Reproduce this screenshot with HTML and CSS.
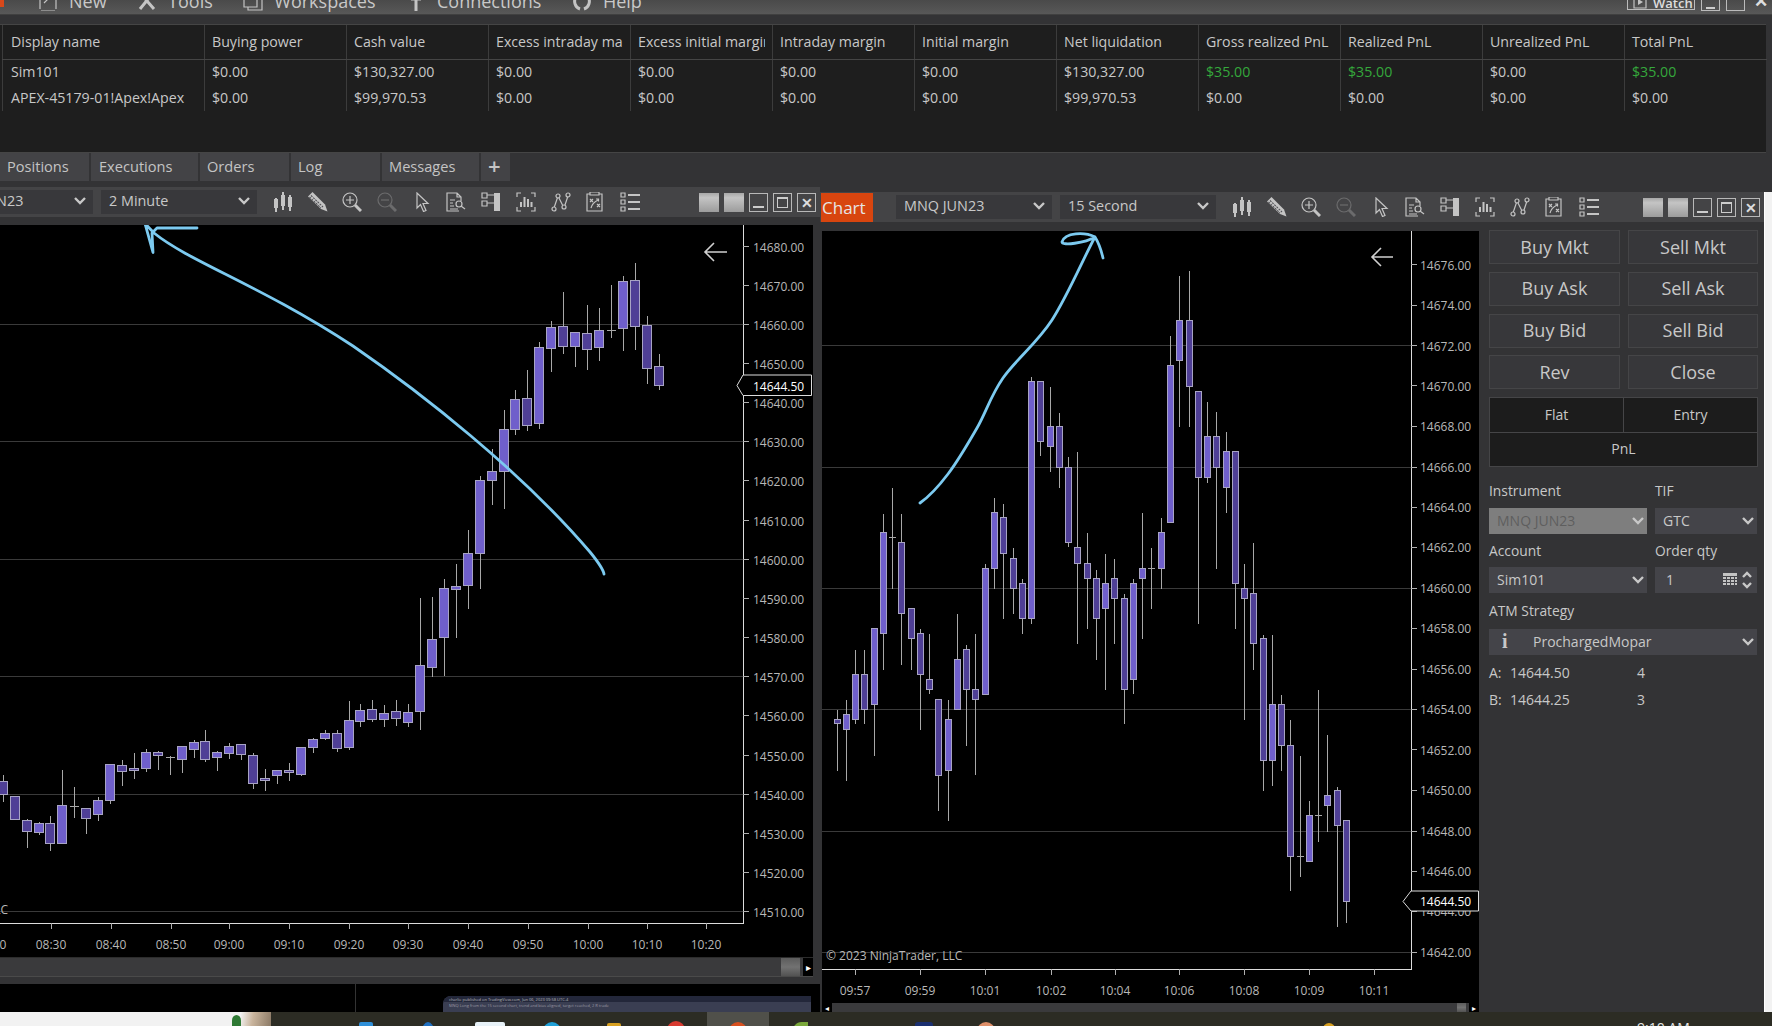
FILE: index.html
```html
<!DOCTYPE html>
<html lang="en">
<head>
<meta charset="utf-8">
<title>NinjaTrader</title>
<link rel="stylesheet" href="styles.css">
</head>
<body>
<svg class="defs" width="0" height="0" aria-hidden="true">
  <symbol id="i-candle" viewBox="0 0 20 20"><path class="s2" d="M3 6v14M10 0v18M17 3v16"/><path class="f" d="M1 7h4v9H1zM8 3h4v11H8zM15 5h4v10h-4z"/></symbol>
  <symbol id="i-pencil" viewBox="0 0 20 20"><path class="f" d="M4.500 0L0 4.500 13 17l6.500 2.500L17 12.500z"/><path class="sd" d="M3 3.500L15 15M1.500 5L13 16"/></symbol>
  <symbol id="i-zin" viewBox="0 0 20 20"><circle class="s" cx="8" cy="8" r="7"/><path class="s" d="M8 4v8M4 8h8"/><path class="s3" d="M13 13l6 6"/></symbol>
  <symbol id="i-zout" viewBox="0 0 20 20"><g class="dim"><circle class="s" cx="8" cy="8" r="7"/><path class="s" d="M4 8h8"/><path class="s3" d="M13 13l6 6"/></g></symbol>
  <symbol id="i-arrow" viewBox="0 0 20 20"><path class="s" d="M5 1v15l3.500-3.500 3 7 2.500-1-3-7h5z"/></symbol>
  <symbol id="i-doc" viewBox="0 0 20 20"><path class="s" d="M13 19H1V1h10l4 4v4M11 1v4h4M4 8h5M4 11h3M4 14h4M4 17h8"/><circle class="s" cx="13" cy="12" r="3"/><path class="s" d="M15 14l4 3"/></symbol>
  <symbol id="i-panel" viewBox="0 0 20 20"><path class="s" d="M1 1h5v5H1zM1 9h5v5H1zM6 3h7M6 11h7"/><path class="f" d="M13 1h6v18h-6z"/></symbol>
  <symbol id="i-bars" viewBox="0 0 20 20"><path class="s" d="M5 1H1v4M15 1h4v4M5 19H1v-4M15 19h4v-4"/><path class="s2" d="M5 15v-5M8.500 15V5M12 15V7M15.500 15v-5"/></symbol>
  <symbol id="i-nodes" viewBox="0 0 20 20"><path class="s" d="M3 16L7 4l6 12 4-12"/><circle class="sb" cx="3" cy="17" r="2"/><circle class="sb" cx="7" cy="4" r="2"/><circle class="sb" cx="13" cy="15" r="2"/><circle class="sb" cx="17" cy="3" r="2"/></symbol>
  <symbol id="i-clip" viewBox="0 0 20 20"><path class="s" d="M5 2H2v17h15V2h-3M5 0h9v3H5zM5 7l3 3M8 7l-3 3M12 12l3 3M15 12l-3 3M6 16c1-4 3-6 7-8M11 7h2.500v2.500"/></symbol>
  <symbol id="i-list" viewBox="0 0 20 20"><path class="s" d="M1 1h4v4H1zM1 8h4v4H1zM1 15h4v4H1z"/><path class="s2" d="M8 3h12M8 10h12M8 17h12"/></symbol>
  <symbol id="i-chev" viewBox="0 0 12 8"><path class="chev" d="M1 1l5 5 5-5"/></symbol>
</svg>

<header class="menubar">
  <span class="logo"></span>
  <nav class="menu">
    <span class="menu-item"><svg class="menu-ico" viewBox="0 0 20 20"><path class="s" d="M2 18V2h16v16M3 20h14M6 12l8-8M10 4h4v4"/></svg>New</span>
    <span class="menu-item"><svg class="menu-ico" viewBox="0 0 20 20"><path class="s3" d="M3 2l14 16M16 2L3 18"/></svg>Tools</span>
    <span class="menu-item"><svg class="menu-ico" viewBox="0 0 20 20"><path class="s" d="M1 3h13v13H1zM5 16v3h14V6h-5"/></svg>Workspaces</span>
    <span class="menu-item"><svg class="menu-ico" viewBox="0 0 20 20"><path class="s3" d="M10 8v12M5 8h10"/></svg>Connections</span>
    <span class="menu-item"><svg class="menu-ico" viewBox="0 0 20 20"><path class="s3" d="M4 6a8 8 0 0 0 4 12M16 6a8 8 0 0 1-4 12"/></svg>Help</span>
  </nav>
  <div class="menu-right">
    <span class="watch"><svg class="watch-ico" viewBox="0 0 14 14"><path class="s" d="M1 1h12v12H1z"/><path class="f" d="M5 4l5 3-5 3z"/></svg>Watch</span>
    <span class="tb tb-min"></span>
    <span class="tb tb-max"></span>
    <span class="tb tb-close">✕</span>
  </div>
</header>

<section class="accounts">
  <table class="acct-table">
    <colgroup><col class="c-first"><col span="11" class="c-rest"></colgroup>
    <thead>
      <tr><th>Display name</th><th>Buying power</th><th>Cash value</th><th><span class="clip">Excess intraday margin</span></th><th><span class="clip">Excess initial margin</span></th><th>Intraday margin</th><th>Initial margin</th><th>Net liquidation</th><th>Gross realized PnL</th><th>Realized PnL</th><th>Unrealized PnL</th><th>Total PnL</th></tr>
    </thead>
    <tbody>
      <tr><td>Sim101</td><td>$0.00</td><td>$130,327.00</td><td>$0.00</td><td>$0.00</td><td>$0.00</td><td>$0.00</td><td>$130,327.00</td><td class="pos">$35.00</td><td class="pos">$35.00</td><td>$0.00</td><td class="pos">$35.00</td></tr>
      <tr><td>APEX-45179-01!Apex!Apex</td><td>$0.00</td><td>$99,970.53</td><td>$0.00</td><td>$0.00</td><td>$0.00</td><td>$0.00</td><td>$99,970.53</td><td>$0.00</td><td>$0.00</td><td>$0.00</td><td>$0.00</td></tr>
    </tbody>
  </table>
</section>

<nav class="tabs">
  <span class="tab tab-pos">Positions</span>
  <span class="tab tab-exe">Executions</span>
  <span class="tab tab-ord">Orders</span>
  <span class="tab tab-log">Log</span>
  <span class="tab tab-msg">Messages</span>
  <span class="tab tab-add">+</span>
</nav>

<main class="desktop">
  <span class="desk-line"></span>
  <div class="thumb">
    <div class="thumb-head">charlie published on TradingView.com, Jun 06, 2023 09:58 UTC-4</div>
    <div class="thumb-body">MNQ Long from the 15 second chart, trend and bias aligned, target reached, 2 R trade</div>
  </div>

  <article class="window win-left">
    <div class="toolbar">
      <div class="select sel-clip"><span>MNQ JUN23</span><svg class="sel-chev"><use href="#i-chev"/></svg></div>
      <div class="select sel-tf"><span>2 Minute</span><svg class="sel-chev"><use href="#i-chev"/></svg></div>
      <div class="tools">
        <svg class="tool"><use href="#i-candle"/></svg><svg class="tool"><use href="#i-pencil"/></svg><svg class="tool"><use href="#i-zin"/></svg><svg class="tool"><use href="#i-zout"/></svg><svg class="tool"><use href="#i-arrow"/></svg><svg class="tool"><use href="#i-doc"/></svg><svg class="tool"><use href="#i-panel"/></svg><svg class="tool"><use href="#i-bars"/></svg><svg class="tool"><use href="#i-nodes"/></svg><svg class="tool"><use href="#i-clip"/></svg><svg class="tool"><use href="#i-list"/></svg>
      </div>
      <div class="winbtns">
        <span class="wb wb-light"></span><span class="wb wb-light"></span><span class="wb wb-min"></span><span class="wb wb-max"></span><span class="wb wb-close">✕</span>
      </div>
    </div>
    <svg class="chart chart-left" viewBox="0 225 813 732">
      <path class="grid" d="M0 324.500H743M0 441.500H743M0 559.500H743M0 676.500H743M0 794.500H743M0 911H743"/>
      <path class="axis" d="M743 225V923H0"/>
      <path class="tick" d="M743 246.500h6M743 285.500h6M743 324.500h6M743 363.500h6M743 402.500h6M743 441.500h6M743 480.500h6M743 520.500h6M743 559.500h6M743 598.500h6M743 637.500h6M743 676.500h6M743 715.500h6M743 755.500h6M743 794.500h6M743 833.500h6M743 872.500h6M743 911.500h6M51 923v6M111 923v6M171 923v6M229 923v6M289 923v6M349 923v6M408 923v6M468 923v6M528 923v6M588 923v6M647 923v6M706 923v6"/>
      <g transform="translate(0 220) scale(.33333 .43367)">
        <path class="wick" d="M10 1280V1343M82 1382V1447M118 1387V1418M151 1375V1456M187 1269V1350M223 1307V1378M211 1353H236M259 1357V1415M295 1331V1385M331 1338V1346M367 1246V1306M403 1230V1288M439 1219V1272M475 1224V1268M511 1235V1279M499 1240H524M547 1244V1276M583 1200V1240M616 1175V1249M652 1224V1270M688 1205V1242M724 1233V1246M760 1230V1313M796 1267V1316M832 1281V1300M868 1253V1293M904 1279V1283M940 1195V1230M976 1177V1198M1012 1177V1226M1048 1109V1223M1081 1117V1170M1117 1107V1157M1153 1119V1168M1189 1107V1166M1225 1117V1170M1261 872V1175M1297 869V1054M1333 827V1051"/>
        <path class="up" d="M105 1391h26v21h-26zM174 1350h26v88h-26zM282 1338h26v33h-26zM318 1255h26v83h-26zM426 1228h26v37h-26zM534 1214h26v30h-26zM570 1205h26v16h-26zM639 1228h26v12h-26zM675 1214h26v16h-26zM819 1269h26v12h-26zM891 1216h26v63h-26zM927 1198h26v19h-26zM963 1184h26v12h-26zM1035 1154h26v63h-26zM1068 1131h26v26h-26zM1140 1138h26v14h-26zM1212 1135h26v24h-26zM1248 1027h26v106h-26zM1284 967h26v65h-26zM1320 850h26v113h-26z"/>
        <path class="down" d="M-3 1295h26v29h-26zM33 1329h26v53h-26zM69 1385h26v25h-26zM138 1391h26v47h-26zM246 1357h26v23h-26zM354 1258h26v13h-26zM390 1265h26v5h-26zM462 1228h26v7h-26zM603 1202h26v42h-26zM711 1209h26v24h-26zM747 1235h26v65h-26zM783 1288h26v5h-26zM855 1269h26v5h-26zM999 1184h26v35h-26zM1104 1129h26v23h-26zM1176 1133h26v17h-26z"/>
      </g>
      <g transform="translate(400 220) scale(.33333 .43367)">
        <path class="wick" d="M169 794V964M205 714V898M241 590V852M277 527V657M313 437V666M346 392V496M382 345V487M418 282V482M454 234V350M490 165V308M526 292V339M562 197V346M598 202V325M634 149V273M622 255H647M670 130V302M706 100V300M742 222V378M778 308V392"/>
        <path class="up" d="M156 845h26v7h-26zM192 769h26v74h-26zM228 601h26v168h-26zM264 580h26v21h-26zM300 483h26v97h-26zM333 414h26v69h-26zM405 294h26v175h-26zM441 248h26v48h-26zM513 259h26v33h-26zM585 255h26v39h-26zM657 142h26v108h-26z"/>
        <path class="down" d="M369 411h26v63h-26zM477 245h26v47h-26zM549 262h26v36h-26zM693 139h26v106h-26zM729 243h26v100h-26zM765 338h26v44h-26z"/>
      </g>
      <path class="ink" d="M197 228H157L152 233L153 252.500L145 223.500L154 233C190 262 260 285 353 346C420 392 520 470 590 552Q603 568 604 574"/>
      <path class="back" d="M727 252H705M714 243L705 252L714 261"/>
      <g class="ax">
        <text x="753" y="247">14680.00</text><text x="753" y="286">14670.00</text><text x="753" y="325">14660.00</text><text x="753" y="364">14650.00</text><text x="753" y="403">14640.00</text><text x="753" y="442">14630.00</text><text x="753" y="481">14620.00</text><text x="753" y="521">14610.00</text><text x="753" y="560">14600.00</text><text x="753" y="599">14590.00</text><text x="753" y="638">14580.00</text><text x="753" y="677">14570.00</text><text x="753" y="716">14560.00</text><text x="753" y="756">14550.00</text><text x="753" y="795">14540.00</text><text x="753" y="834">14530.00</text><text x="753" y="873">14520.00</text><text x="753" y="912">14510.00</text>
      </g>
      <path class="tag" d="M737 385.500L743 375H811.500V395.500H743Z"/>
      <text class="ax ax-now" x="753" y="386">14644.50</text>
      <g class="ax ax-mid">
        <text x="-9" y="944">08:20</text><text x="51" y="944">08:30</text><text x="111" y="944">08:40</text><text x="171" y="944">08:50</text><text x="229" y="944">09:00</text><text x="289" y="944">09:10</text><text x="349" y="944">09:20</text><text x="408" y="944">09:30</text><text x="468" y="944">09:40</text><text x="528" y="944">09:50</text><text x="588" y="944">10:00</text><text x="647" y="944">10:10</text><text x="706" y="944">10:20</text>
      </g>
      <text class="ax ax-end" x="8" y="909">© 2023 NinjaTrader, LLC</text>
    </svg>
    <div class="hscroll">
      <span class="thumb-bar"></span>
      <span class="scroll-arrow">▸</span>
    </div>
  </article>

  <article class="window win-right">
    <div class="toolbar">
      <span class="chart-tab">Chart</span>
      <div class="select sel-tf"><span>MNQ JUN23</span><svg class="sel-chev"><use href="#i-chev"/></svg></div>
      <div class="select sel-tf"><span>15 Second</span><svg class="sel-chev"><use href="#i-chev"/></svg></div>
      <div class="tools">
        <svg class="tool"><use href="#i-candle"/></svg><svg class="tool"><use href="#i-pencil"/></svg><svg class="tool"><use href="#i-zin"/></svg><svg class="tool"><use href="#i-zout"/></svg><svg class="tool"><use href="#i-arrow"/></svg><svg class="tool"><use href="#i-doc"/></svg><svg class="tool"><use href="#i-panel"/></svg><svg class="tool"><use href="#i-bars"/></svg><svg class="tool"><use href="#i-nodes"/></svg><svg class="tool"><use href="#i-clip"/></svg><svg class="tool"><use href="#i-list"/></svg>
      </div>
      <div class="winbtns">
        <span class="wb wb-light"></span><span class="wb wb-light"></span><span class="wb wb-min"></span><span class="wb wb-max"></span><span class="wb wb-close">✕</span>
      </div>
    </div>
    <div class="win-body">
      <div class="chart-col">
        <svg class="chart chart-right" viewBox="822 231 657 772">
          <path class="grid" d="M822 345H1411M822 467H1411M822 588H1411M822 709.500H1411M822 831H1411M822 952H1411"/>
          <path class="axis" d="M1411 231V969H822"/>
          <path class="tick" d="M1411 264.500h6M1411 305h6M1411 345h6M1411 385.500h6M1411 426h6M1411 467h6M1411 507h6M1411 547h6M1411 588h6M1411 628h6M1411 669h6M1411 709.500h6M1411 749h6M1411 790h6M1411 831h6M1411 871h6M1411 911h6M1411 952h6M855 969v6M920 969v6M985 969v6M1051 969v6M1115 969v6M1179 969v6M1244 969v6M1309 969v6M1374 969v6"/>
          <g transform="translate(820 220) scale(.33333 .43367)">
            <path class="wick" d="M52 1130V1270M79 1107V1293M106 992V1163M133 992V1163M163 1117V1235M190 677V1037M217 618V850M207 732H228M244 677V1026M274 965V1037M301 943V1175M328 955V1094M355 1280V1362M385 1107V1385M412 909V1013M439 979V1212M466 955V1280M496 794V803M523 642V850M550 654V919M580 757V908M607 828V955M634 363V931M661 511V545M691 385V582M718 444V617M745 547V755M772 536V977M802 722V942M829 806V1014M856 770V1083M883 782V977M913 862V1163M940 828V1094"/>
            <path class="up" d="M70 1140h19v35h-19zM97 1048h19v104h-19zM154 942h19v175h-19zM181 720h19v234h-19zM376 1152h19v118h-19zM403 1013h19v116h-19zM487 803h19v291h-19zM514 674h19v129h-19zM625 372h19v547h-19zM682 476h19v46h-19zM847 838h19v58h-19zM931 838h19v221h-19z"/>
            <path class="down" d="M43 1152h19v10h-19zM124 1048h19v81h-19zM235 743h19v164h-19zM265 896h19v69h-19zM292 953h19v95h-19zM319 1059h19v24h-19zM346 1106h19v174h-19zM430 990h19v92h-19zM457 1082h19v24h-19zM541 686h19v83h-19zM571 780h19v70h-19zM598 838h19v81h-19zM652 372h19v139h-19zM709 476h19v95h-19zM736 571h19v173h-19zM763 755h19v37h-19zM793 792h19v35h-19zM820 827h19v92h-19zM874 827h19v46h-19zM904 873h19v209h-19z"/>
          </g>
          <g transform="translate(1130 220) scale(.33333 .45918)">
            <path class="wick" d="M37 638V912M64 714V847M54 759H75M94 650V803M121 253V317M148 121V450M178 110V450M205 561V880M232 396V573M259 418V760M289 462V638M316 792V890M343 749V1088M370 704V980M400 903V1244M427 903V1232M454 1034V1200M481 1089V1462M511 1167V1430M501 1386H522M538 1265V1297M565 1024V1355M555 1297H576M592 1122V1332M622 1234V1540M649 1484V1530"/>
            <path class="up" d="M28 759h19v22h-19zM85 680h19v79h-19zM112 317h19v342h-19zM139 218h19v88h-19zM223 471h19v90h-19zM280 504h19v79h-19zM418 1055h19v122h-19zM529 1297h19v100h-19zM583 1253h19v22h-19z"/>
            <path class="down" d="M169 218h19v144h-19zM196 373h19v188h-19zM250 471h19v68h-19zM307 504h19v288h-19zM334 802h19v22h-19zM361 813h19v109h-19zM391 911h19v266h-19zM445 1055h19v89h-19zM472 1144h19v242h-19zM613 1242h19v77h-19zM640 1308h19v176h-19z"/>
          </g>
          <path class="ink" d="M920 503C930 496 938.500 486.500 948 474C957.500 461.500 967.800 444 977 428C986.200 412 990.500 396 1003 378C1015.500 360 1036.700 343.500 1052 320C1067.300 296.500 1085 255 1095 237C1085 232 1065 232 1062 242C1062 246 1085 243 1095 237Q1100 245 1103 258"/>
          <path class="back" d="M1393 257H1372M1381 248L1372 257L1381 266"/>
          <g class="ax">
            <text x="1420" y="265">14676.00</text><text x="1420" y="305.500">14674.00</text><text x="1420" y="346">14672.00</text><text x="1420" y="386">14670.00</text><text x="1420" y="426.500">14668.00</text><text x="1420" y="467">14666.00</text><text x="1420" y="507">14664.00</text><text x="1420" y="547.500">14662.00</text><text x="1420" y="588">14660.00</text><text x="1420" y="628.500">14658.00</text><text x="1420" y="669">14656.00</text><text x="1420" y="709.500">14654.00</text><text x="1420" y="750">14652.00</text><text x="1420" y="790">14650.00</text><text x="1420" y="831">14648.00</text><text x="1420" y="871">14646.00</text><text x="1420" y="911">14644.00</text><text x="1420" y="952">14642.00</text>
          </g>
          <path class="tag" d="M1403 901.500L1411 891H1478.500V911H1411Z"/>
          <text class="ax ax-now" x="1420" y="901.500">14644.50</text>
          <g class="ax ax-mid">
            <text x="855" y="990">09:57</text><text x="920" y="990">09:59</text><text x="985" y="990">10:01</text><text x="1051" y="990">10:02</text><text x="1115" y="990">10:04</text><text x="1179" y="990">10:06</text><text x="1244" y="990">10:08</text><text x="1309" y="990">10:09</text><text x="1374" y="990">10:11</text>
          </g>
          <text class="ax" x="826" y="955">© 2023 NinjaTrader, LLC</text>
        </svg>
        <div class="hscroll hscroll-r">
          <span class="scroll-arrow">◂</span>
          <span class="scroll-fill"></span>
          <span class="thumb-bar"></span>
          <span class="scroll-arrow">▸</span>
        </div>
      </div>

      <aside class="order-panel">
        <div class="btn-grid">
          <button class="ord-btn">Buy Mkt</button><button class="ord-btn">Sell Mkt</button>
          <button class="ord-btn">Buy Ask</button><button class="ord-btn">Sell Ask</button>
          <button class="ord-btn">Buy Bid</button><button class="ord-btn">Sell Bid</button>
          <button class="ord-btn">Rev</button><button class="ord-btn">Close</button>
        </div>
        <div class="pos-box">
          <div class="pos-cell">Flat</div><div class="pos-cell pos-cell-r">Entry</div>
          <div class="pos-cell pos-wide">PnL</div>
        </div>
        <div class="form-grid">
          <label class="lbl lbl-1">Instrument</label><label class="lbl lbl-1">TIF</label>
          <div class="field field-off"><span>MNQ JUN23</span><svg class="sel-chev"><use href="#i-chev"/></svg></div>
          <div class="field"><span>GTC</span><svg class="sel-chev"><use href="#i-chev"/></svg></div>
          <label class="lbl lbl-2">Account</label><label class="lbl lbl-2">Order qty</label>
          <div class="field"><span>Sim101</span><svg class="sel-chev"><use href="#i-chev"/></svg></div>
          <div class="field field-qty"><span>1</span>
            <svg class="calc" viewBox="0 0 14 14"><path class="f" d="M0 0h14v3H0zM0 4h3v2H0zM4 4h3v2H4zM8 4h3v2H8zM12 4h2v2h-2zM0 7h3v2H0zM4 7h3v2H4zM8 7h3v2H8zM12 7h2v2h-2zM0 10h3v2H0zM4 10h3v2H4zM8 10h3v2H8zM12 10h2v2h-2z"/></svg>
            <svg class="spin" viewBox="0 0 10 18"><path class="chev" d="M1 6l4-4 4 4M1 12l4 4 4-4"/></svg>
          </div>
          <label class="lbl lbl-3 span2">ATM Strategy</label>
          <div class="field span2 field-atm"><span class="info">i</span><span>ProchargedMopar</span><svg class="sel-chev"><use href="#i-chev"/></svg></div>
        </div>
        <div class="quote"><span>A:</span><span>14644.50</span><span>4</span></div>
        <div class="quote"><span>B:</span><span>14644.25</span><span>3</span></div>
      </aside>
    </div>
  </article>
  <span class="screen-edge"></span>
</main>

<footer class="taskbar">
  <div class="task-wall"><span class="wall-leaf"></span><span class="wall-photo"></span></div>
  <div class="task-icons">
    <span class="slot"><i class="ti ti-blue-sq"></i></span>
    <span class="slot"><i class="ti ti-blue-tri"></i></span>
    <span class="slot"><i class="ti ti-white"></i></span>
    <span class="slot"><i class="ti ti-cyan"></i></span>
    <span class="slot"><i class="ti ti-yellow"></i></span>
    <span class="slot"><i class="ti ti-red"></i></span>
    <span class="slot slot-active"><i class="ti ti-orange"></i></span>
    <span class="slot"><i class="ti ti-green"></i></span>
    <span class="slot"></span>
    <span class="slot"><i class="ti ti-navy"></i></span>
    <span class="slot"><i class="ti ti-peach"></i></span>
  </div>
  <span class="tray-dot"></span>
  <time class="clock">9:10 AM</time>
</footer>
</body>
</html>
```
FILE: styles.css
```css
* { box-sizing: border-box; }
html, body { margin: 0; height: 100%; }
body {
  width: 1772px;
  height: 1026px;
  overflow: hidden;
  background: #333335;
  color: #c8c8c8;
  font-family: "Open Sans", "Noto Sans", sans-serif;
  font-size: 14px;
  display: flex;
  flex-direction: column;
}
.defs { position: absolute; }

/* shared icon strokes */
.s { fill: none; stroke: #c4c4c4; stroke-width: 1.2; }
.s2 { fill: none; stroke: #c4c4c4; stroke-width: 2; }
.s3 { fill: none; stroke: #c4c4c4; stroke-width: 3; }
.sb { fill: #444446; stroke: #c4c4c4; stroke-width: 1.2; }
.sd { fill: none; stroke: #505055; stroke-width: 1.1; stroke-dasharray: 2 1; }
.f { fill: #c4c4c4; }
.dim { opacity: .3; }
.chev { fill: none; stroke: #c8c8c8; stroke-width: 2.4; }

/* menu */
.menubar {
  flex: none;
  height: 15px;
  background: linear-gradient(#4a4a4a, #585858);
  border-bottom: 1px solid #404040;
  display: flex;
  overflow: hidden;
  position: relative;
}
.logo { position: absolute; left: 0; top: 0; width: 4px; height: 7px; background: #d8481a; }
.menu { display: flex; gap: 30.500px; margin: -13px 0 0 38px; height: 28px; }
.menu-item { display: flex; align-items: center; gap: 11px; font-size: 18px; line-height: 28px; color: #c8c8c8; }
.menu-ico { width: 20px; height: 20px; }
.menu-right { margin-left: auto; display: flex; align-items: flex-start; gap: 6px; padding-right: 2px; }
.watch {
  width: 68px; height: 11px; margin-top: -1px;
  border: 1px solid #bbb;
  font-size: 13px; font-weight: 600; line-height: 6px;
  display: flex; gap: 6px; padding-left: 5px;
  overflow: hidden; color: #ddd;
}
.watch-ico { width: 14px; height: 14px; margin-top: -5px; flex: none; }
.tb { width: 19px; height: 12px; margin-top: -1px; border: 1px solid #bbb; position: relative; overflow: hidden; font-size: 17px; line-height: 4px; text-align: center; color: #ddd; }
.tb-min::after { content: ""; position: absolute; left: 4px; right: 4px; bottom: 1px; height: 2px; background: #ccc; }
.tb-close { border: 0; font-weight: 700; }

/* account grid */
.accounts {
  flex: none;
  height: 129px;
  margin: 9px 6px 0 0;
  background: #1e1e1e;
  border-top: 1px solid #454545;
  border-bottom: 1px solid #454545;
  padding-left: 2px;
}
.acct-table { border-collapse: collapse; table-layout: fixed; width: 1764px; }
.c-first { width: 202px; }
.c-rest { width: 142px; }
.acct-table th, .acct-table td {
  padding: 0 7px;
  font-size: 14.2px;
  font-weight: 400;
  text-align: left;
  white-space: nowrap;
  overflow: hidden;
  border-left: 1px solid #3c3c3c;
  color: #c8c8c8;
}
.acct-table th:first-child, .acct-table td:first-child { padding-left: 8px; }
.acct-table th { height: 34px; border-bottom: 1px solid #454545; }
.acct-table td { height: 26px; padding-bottom: 2px; }
.acct-table td.pos { color: #35a83c; }
.clip { display: block; overflow: hidden; }

/* tabs */
.tabs { flex: none; height: 39px; display: flex; align-items: flex-start; gap: 2px; }
.tab { height: 28px; background: #434346; padding-left: 7px; line-height: 27px; color: #c4c4c4; font-size: 14.6px; }
.tab-pos { width: 89px; }
.tab-exe { width: 107px; padding-left: 8px; }
.tab-ord { width: 89px; }
.tab-log { width: 89px; }
.tab-msg { width: 97px; }
.tab-add { width: 29px; font-size: 22px; font-weight: 600; padding-left: 7px; line-height: 25px; }

/* desktop + windows */
.desktop { flex: none; height: 820px; position: relative; background: #000; }
.desk-line { position: absolute; left: 355px; top: 792px; width: 1px; height: 28px; background: #333; }
.thumb { position: absolute; left: 443px; top: 804px; width: 368px; height: 16px; background: #3a3e52; border-radius: 8px 0 0 0; overflow: hidden; font-size: 4px; color: #bbb; }
.thumb-head { height: 6px; background: #23273a; padding: 1px 0 0 6px; white-space: nowrap; line-height: 5px; }
.thumb-body { padding: 1px 0 0 6px; white-space: nowrap; line-height: 5px; color: #9a9aa4; }
.window { position: absolute; background: #333335; display: flex; flex-direction: column; }
.win-left { left: 0; top: -5px; width: 820px; height: 797px; overflow: hidden; }
.win-right { left: 820px; top: 0; width: 945px; height: 820px; border-right: 1px solid #fff; }
.screen-edge { position: absolute; right: 0; top: 0; width: 7px; height: 100%; background: #f2f2f2; }

.toolbar { flex: none; height: 30px; background: #444446; display: flex; align-items: center; }
.win-left .toolbar { padding-right: 4px; }
.win-right .toolbar { padding-right: 4px; padding-left: 1px; }
.select { width: 156px; height: 24px; background: #38383b; display: flex; align-items: center; justify-content: space-between; padding: 0 7px 3px 8px; font-size: 14.4px; color: #c8c8c8; white-space: nowrap; flex: none; }
.sel-clip { margin-left: -63px; padding-left: 6px; margin-right: 8px; }
.sel-tf { margin-right: 8px; }
.sel-chev { width: 12px; height: 8px; flex: none; }
.tools { display: flex; gap: 14.700px; margin-left: 8px; }
.tool { width: 20px; height: 20px; display: block; flex: none; }
.winbtns { margin-left: auto; display: flex; gap: 5px; }
.wb { width: 19px; height: 19px; border: 1px solid #b8b8b8; position: relative; font-size: 14px; font-weight: 700; text-align: center; line-height: 17px; color: #ddd; }
.wb-light { width: 20px; border: 0; background: linear-gradient(#a8a8a8, #c4c4c4 25%, #9c9c9c); }
.wb-min::after { content: ""; position: absolute; left: 3px; right: 3px; bottom: 3px; height: 2px; background: #ccc; }
.wb-max::after { content: ""; position: absolute; left: 3px; right: 3px; top: 3px; bottom: 3px; border: 1px solid #ccc; border-top-width: 2px; }
.chart-tab { width: 52px; height: 29px; background: #d8450f; color: #e6e6e6; font-size: 17px; line-height: 29px; padding-left: 1px; margin-right: 23px; flex: none; }

.chart { display: block; background: #000; flex: none; }
.chart-left { width: 813px; height: 732px; margin-top: 8px; }
.chart-right { width: 657px; height: 772px; }
.grid { fill: none; stroke: #3a3a3a; stroke-width: 1; shape-rendering: crispEdges; }
.axis { fill: none; stroke: #dcdcdc; stroke-width: 1; shape-rendering: crispEdges; }
.tick { fill: none; stroke: #b0b0b0; stroke-width: 1; shape-rendering: crispEdges; }
.wick { fill: none; stroke: #a8a8a8; stroke-width: 1; vector-effect: non-scaling-stroke; shape-rendering: crispEdges; }
.up, .down { stroke: #a8a4c4; stroke-width: 1; vector-effect: non-scaling-stroke; shape-rendering: crispEdges; }
.up { fill: #6f5fcb; }
.down { fill: #4f3f96; }
.ink { fill: none; stroke: #7ccaf0; stroke-width: 2.8; stroke-linecap: round; stroke-linejoin: round; }
.back { fill: none; stroke: #d0d0d0; stroke-width: 1.6; }
.ax { font-family: "Open Sans", sans-serif; font-size: 12px; fill: #b8b8b8; dominant-baseline: central; }
.ax-now { fill: #fff; }
.ax-mid { text-anchor: middle; }
.ax-end { text-anchor: end; }
.tag { fill: #000; stroke: #dcdcdc; stroke-width: 1; }

.hscroll { flex: none; height: 20px; width: 813px; background: #3a3a3c; border-top: 1px solid #2c2c2c; border-bottom: 1px solid #4a4a4a; display: flex; justify-content: flex-end; align-items: stretch; gap: 3px; }
.thumb-bar { width: 19px; background: linear-gradient(#5c5c5c, #727272 50%, #525252); }
.scroll-arrow { width: 10px; background: #000; color: #fff; font-size: 10px; text-align: center; line-height: 18px; }
.win-body { flex: 1; display: flex; min-height: 0; padding: 9px 0 0 2px; }
.chart-col { width: 657px; flex: none; display: flex; flex-direction: column; }
.hscroll-r { width: 657px; height: 9px; border: 0; gap: 0; }
.hscroll-r .scroll-arrow { line-height: 9px; font-size: 8px; }
.hscroll-r .thumb-bar { width: 9px; margin-right: 3px; }
.scroll-fill { flex: 1; }

/* order panel */
.order-panel { flex: 1; padding: 0 5px 0 10px; margin-top: -1px; }
.btn-grid { display: grid; grid-template-columns: 131px 130px; grid-auto-rows: 34px; column-gap: 8px; row-gap: 7.800px; }
.ord-btn { background: #37373a; border: 1px solid #454547; color: #c8c8c8; font: 18px "Open Sans", sans-serif; padding: 0 0 1px; }
.pos-box { display: grid; grid-template-columns: 133px 134px; grid-auto-rows: 34px; margin-top: 8px; background: #1c1c1c; border: 1px solid #454547; width: 269px; font-size: 14px; }
.pos-cell { display: flex; align-items: center; justify-content: center; padding-bottom: 2px; }
.pos-cell-r { border-left: 1px solid #454547; }
.pos-wide { grid-column: span 2; border-top: 1px solid #454547; }
.form-grid { display: grid; grid-template-columns: 158px 102px; column-gap: 8px; }
.span2 { grid-column: span 2; }
.lbl { height: 18px; line-height: 18px; font-size: 13.8px; color: #c8c8c8; }
.lbl-1 { margin: 15px 0 8px; }
.lbl-2 { margin: 8px 0 7px; }
.lbl-3 { margin: 9px 0 9px; }
.field { height: 26px; background: #444449; display: flex; align-items: center; justify-content: space-between; padding: 0 3px 1px 8px; font-size: 14px; color: #c8c8c8; }
.field-off { background: #7e7e7e; color: #5e5e5e; }
.field-off .chev { stroke: #5e5e5e; }
.field-qty { padding-left: 11px; }
.calc { width: 14px; height: 14px; margin-left: auto; margin-right: 5px; }
.spin { width: 10px; height: 18px; margin-right: 2px; }
.field-atm { justify-content: flex-start; padding-left: 13px; }
.field-atm .sel-chev { margin-left: auto; }
.info { font-family: "Liberation Serif", serif; font-weight: 700; font-size: 20px; color: #c8c8c8; width: 31px; }
.quote { display: grid; grid-template-columns: 21px 127px auto; height: 27px; line-height: 27px; font-size: 14px; }
.form-grid + .quote { margin-top: 4px; }

/* taskbar */
.taskbar { flex: none; height: 14px; background: #2c2c24; display: flex; overflow: hidden; position: relative; }
.task-wall { width: 271px; flex: none; background: #f2f2f2; position: relative; overflow: hidden; }
.wall-photo { position: absolute; right: 0; top: 0; width: 30px; height: 14px; background: linear-gradient(100deg, #f2f2f2, #c9b49c 40%, #8c7a66); }
.wall-leaf { position: absolute; left: 232px; top: 3px; width: 9px; height: 11px; background: #2f7a35; border-radius: 50% 50% 0 0; z-index: 1; }
.task-icons { display: flex; margin-left: 64px; }
.slot { width: 62px; display: flex; justify-content: center; flex: none; }
.slot-active { background: #50504a; }
.ti { display: block; width: 18px; height: 18px; margin-top: 10px; border-radius: 50%; }
.ti-blue-sq { background: #2f8fd8; border-radius: 2px; width: 14px; margin-top: 10px; }
.ti-blue-tri { background: #1f6fc0; width: 12px; }
.ti-white { background: #e8f2f8; width: 30px; border-radius: 2px; }
.ti-cyan { background: #1fa0d8; }
.ti-yellow { background: #d8a020; width: 14px; border-radius: 2px; margin-top: 11px; }
.ti-red { background: #d83a30; margin-top: 9px; }
.ti-orange { background: #d8501f; }
.ti-green { background: #7aa83a; width: 16px; border-radius: 60% 0 0 0; }
.ti-navy { background: #1a2f70; border-radius: 3px; }
.ti-peach { background: #e0906a; margin-top: 10px; }
.tray-dot { position: absolute; left: 1323px; top: 11px; width: 12px; height: 12px; border-radius: 50%; background: #d8a020; }
.clock { position: absolute; left: 1637px; top: 7px; font-size: 14px; line-height: 18px; color: #e6e6e6; }
```
